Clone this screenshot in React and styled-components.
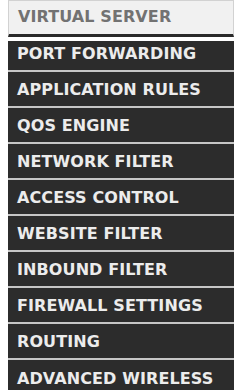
import React from "react";
import styled, { createGlobalStyle } from "styled-components";

const Global = createGlobalStyle`
  body {
    margin: 0;
    background: #ffffff;
  }
`;

const Menu = styled.ul`
  list-style: none;
  margin: 0;
  padding: 0 0 0 8px;
  width: 226px;
  font-family: "DejaVu Sans", Verdana, sans-serif;
  font-weight: bold;
  font-size: 16px;
  letter-spacing: 0.1px;
`;

const Active = styled.li`
  box-sizing: border-box;
  height: 37px;
  display: flex;
  align-items: center;
  padding: 0 0 3px 9px;
  background: #f1f1f1;
  color: #727272;
  border: 1px solid #d2d2d2;
  border-bottom: 3px solid #2a2a2a;
  margin-bottom: 4px;
`;

const Item = styled.li`
  box-sizing: border-box;
  height: ${(p) => (p.$short ? "31px" : "36px")};
  display: flex;
  align-items: center;
  padding: 0 0 ${(p) => (p.$short ? "5px" : "0")} 9px;
  background: #2c2c2c;
  color: #ececec;
  border-bottom: 2px solid #c6c6c6;
  &:last-child {
    border-bottom: none;
  }
`;

const items = [
  "PORT FORWARDING",
  "APPLICATION RULES",
  "QOS ENGINE",
  "NETWORK FILTER",
  "ACCESS CONTROL",
  "WEBSITE FILTER",
  "INBOUND FILTER",
  "FIREWALL SETTINGS",
  "ROUTING",
  "ADVANCED WIRELESS",
];

export default function App() {
  return (
    <>
      <Global />
      <Menu>
        <Active>VIRTUAL SERVER</Active>
        {items.map((label, i) => (
          <Item key={label} $short={i === 0}>
            {label}
          </Item>
        ))}
      </Menu>
    </>
  );
}
